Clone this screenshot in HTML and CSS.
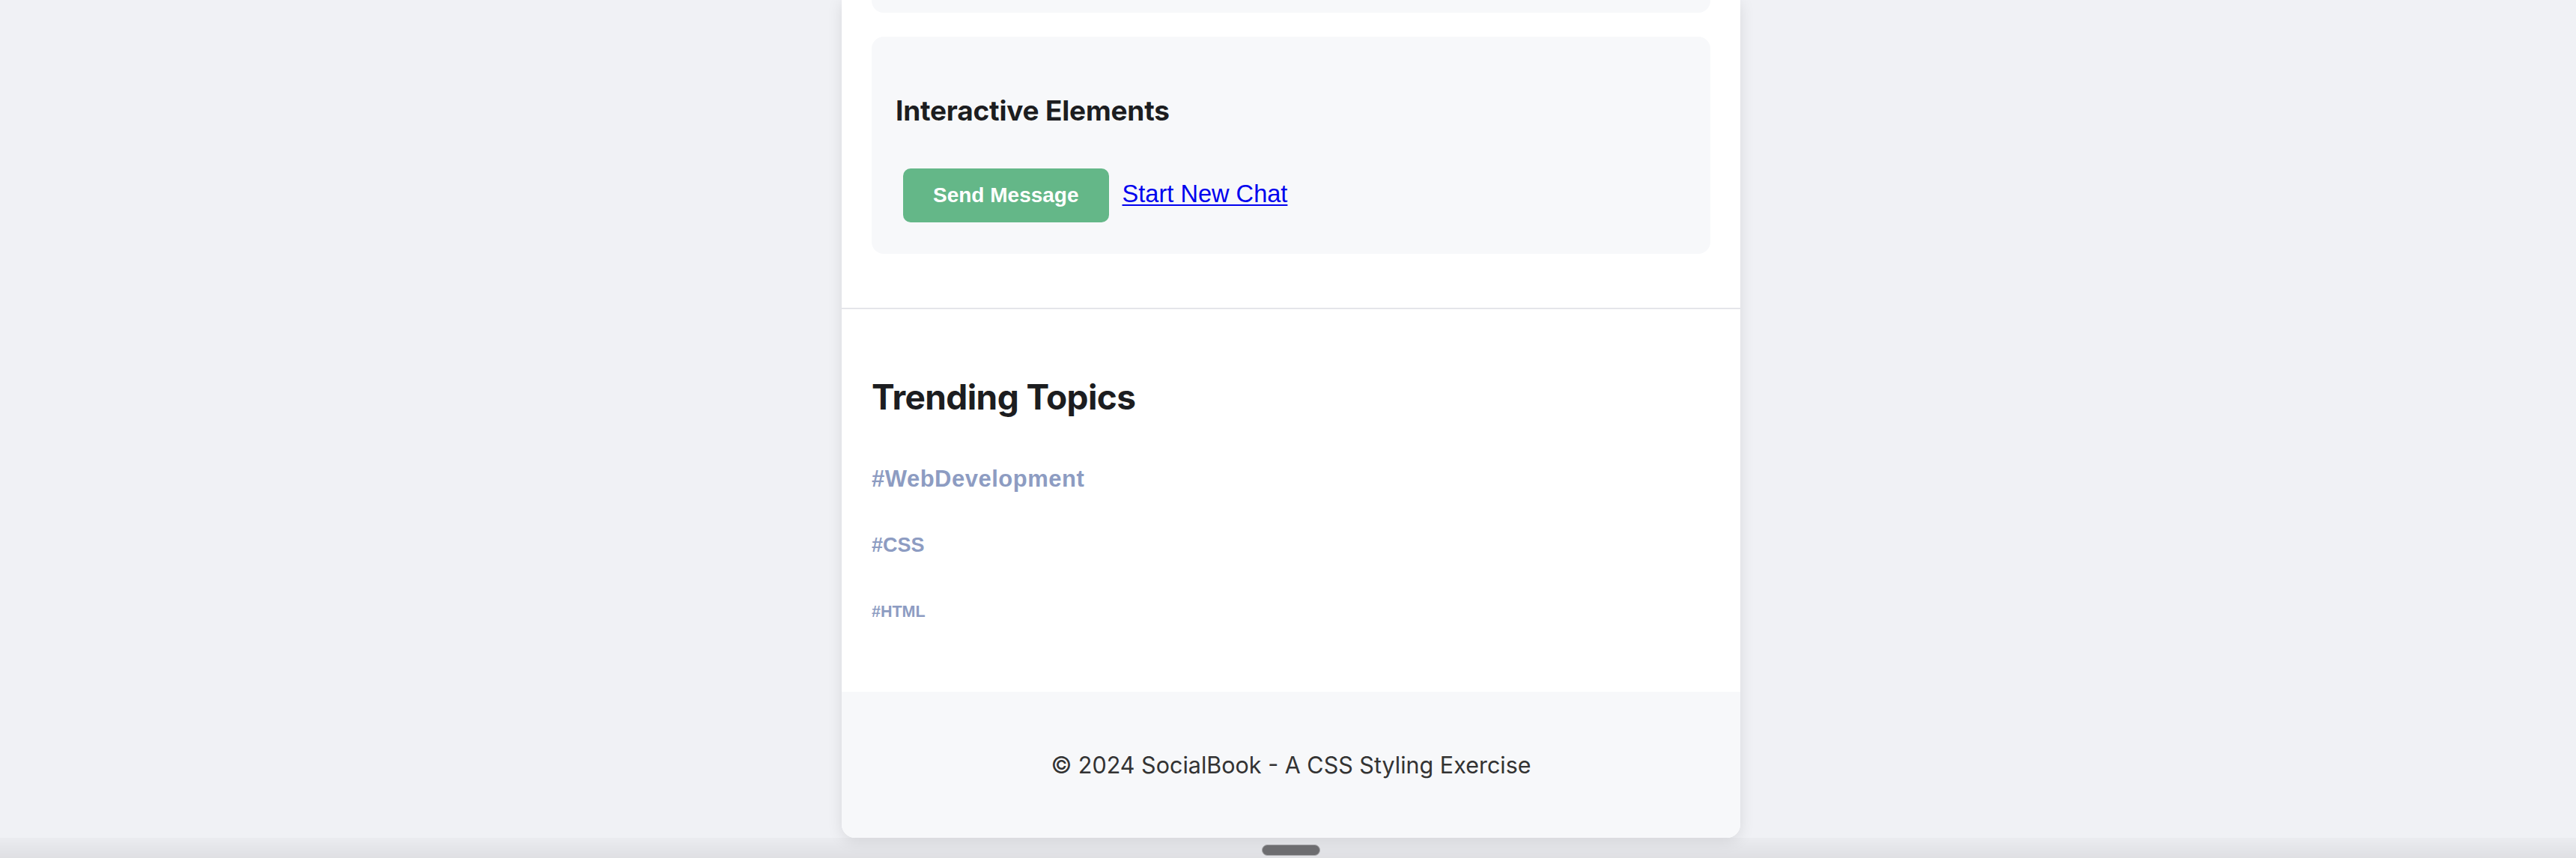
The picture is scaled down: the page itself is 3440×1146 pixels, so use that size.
FILE: index.html
```html
<!DOCTYPE html>
<html lang="en">
<head>
<meta charset="utf-8">
<title>SocialBook</title>
<link rel="stylesheet" href="styles.css">
</head>
<body>
<div class="page">
  <main class="container">
    <section class="section section-top">
      <div class="card card-stub"></div>
      <div class="card card-interactive">
        <h3 class="card-title">Interactive Elements</h3>
        <div class="actions">
          <button class="btn-send" type="button">Send Message</button>
          <a class="link-chat" href="#">Start New Chat</a>
        </div>
      </div>
    </section>
    <section class="section section-trending">
      <h2 class="trending-title">Trending Topics</h2>
      <div class="tags">
        <a class="tag tag-lg" href="#">#WebDevelopment</a>
        <a class="tag tag-md" href="#">#CSS</a>
        <a class="tag tag-sm" href="#">#HTML</a>
      </div>
    </section>
    <footer class="footer">
      <p class="footer-text">© 2024 SocialBook - A CSS Styling Exercise</p>
    </footer>
  </main>
</div>
<div class="bottom-shade"><span class="handle"></span></div>
</body>
</html>
```
FILE: styles.css
```css
html, body {
  margin: 0;
  padding: 0;
}
body {
  background: #f0f1f5;
  font-family: Inter, "Noto Sans", sans-serif;
  color: #1c1d20;
  height: 1146px;
  overflow: hidden;
}
.page {
  padding-left: 8px;
}
.container {
  width: 1200px;
  margin: 0 auto;
  background: #ffffff;
  border-radius: 0 0 18px 18px;
  box-shadow: 0 4px 20px rgba(0, 0, 0, 0.10);
  overflow: hidden;
}
.section-top {
  padding: 0 40px 40px;
}
.card {
  background: #f7f8fa;
  border-radius: 16px;
}
.card-stub {
  height: 17px;
  border-radius: 0 0 16px 16px;
}
.card-interactive {
  margin-top: 32px;
  margin-bottom: 32px;
  padding: 32px;
}
.card-title {
  margin: 45px 0 45px;
  font-size: 37px;
  line-height: 44px;
  font-weight: 700;
  letter-spacing: -0.2px;
  color: #1c1d20;
}
.actions {
  display: flex;
  align-items: baseline;
}
.btn-send {
  margin: 10px;
  padding: 20px 40px;
  border: 0;
  border-radius: 10px;
  background: #64b788;
  color: #ffffff;
  font-family: "Liberation Sans", Arial, sans-serif;
  font-weight: 700;
  font-size: 28px;
  line-height: 32px;
}
.link-chat {
  margin-left: 8px;
  font-family: "Liberation Sans", Arial, sans-serif;
  font-size: 32.6px;
  color: #0000ee;
  text-decoration: underline;
  text-decoration-thickness: 2px;
  text-underline-offset: 3px;
}
.section-trending {
  border-top: 2px solid #e4e5ea;
  padding: 40px 40px 40px;
}
.trending-title {
  margin: 50px 0 0;
  font-size: 46px;
  line-height: 55px;
  font-weight: 700;
  letter-spacing: -0.6px;
  color: #1c1d20;
}
.tags {
  display: flex;
  flex-direction: column;
  align-items: flex-start;
  margin-top: 66px;
  padding-bottom: 55px;
}
.tag {
  display: block;
  font-family: "Liberation Sans", Arial, sans-serif;
  font-weight: 700;
  line-height: 1;
  color: #8d9cc2;
  text-decoration: none;
}
.tag-lg {
  font-size: 31px;
  letter-spacing: 0.5px;
}
.tag-md {
  font-size: 27px;
  margin-top: 60px;
}
.tag-sm {
  font-size: 21.5px;
  margin-top: 65px;
}
.footer {
  background: #f7f8fa;
  padding: 80px 0 80px;
  text-align: center;
}
.footer-text {
  margin: 0;
  font-size: 30.5px;
  line-height: 35px;
  color: #333333;
}
.bottom-shade {
  position: fixed;
  left: 0;
  right: 0;
  bottom: 0;
  height: 27px;
  background: linear-gradient(to bottom, rgba(0, 0, 0, 0.02), rgba(0, 0, 0, 0.07));
  display: flex;
  justify-content: center;
  padding-left: 8px;
}
.handle {
  margin-top: 9px;
  width: 76px;
  height: 13px;
  border-radius: 8px;
  background: #6d6d70;
  border: 1px solid #a7a7aa;
}
```
